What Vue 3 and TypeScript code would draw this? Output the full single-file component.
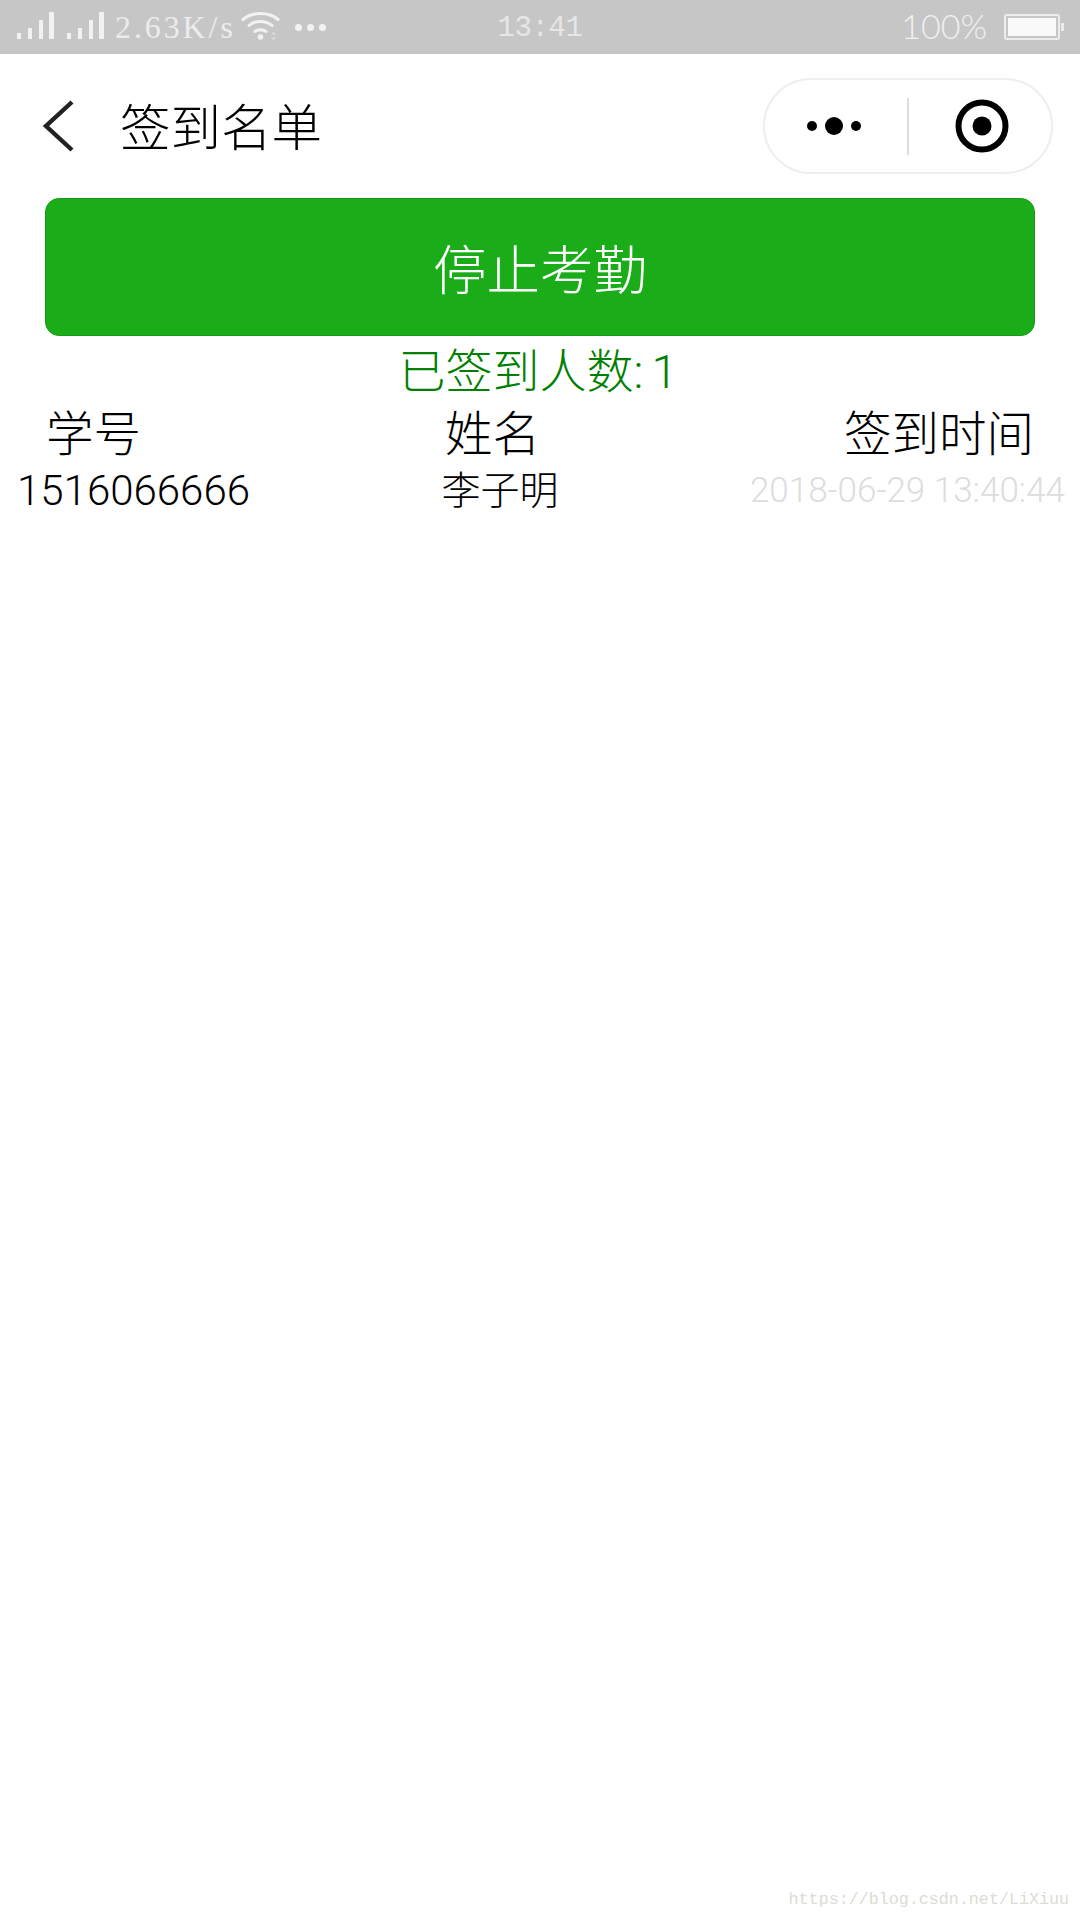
<template>
  <div class="page">
    <div class="status-bar">
      <div class="status-left">
        <svg class="signal" width="90" height="30" viewBox="0 0 90 30">
          <g v-for="group in [0, 50]" :key="group" :transform="`translate(${group} 0)`">
            <rect x="0" y="21" width="4" height="6" />
            <rect x="11" y="16" width="4" height="11" />
            <rect x="22" y="8" width="4" height="19" />
            <rect x="32" y="0" width="5" height="27" />
          </g>
        </svg>
        <span class="speed">2.63K/s</span>
        <svg class="wifi" width="40" height="30" viewBox="0 0 40 30" fill="none" stroke="#f2f2f2" stroke-linecap="round">
          <path d="M2 8.5C11 0.5 28 0.5 37 8.5" stroke-width="3.2" />
          <path d="M8 14.5C14 9 25 9 31 14.5" stroke-width="3" />
          <path d="M14 20.5C17 18 22 18 25 20.5" stroke-width="3" />
          <circle cx="19.5" cy="26" r="2.8" fill="#f2f2f2" stroke="none" />
          <path d="M30 23.5l2.5-2.5 2.5 2.5zM30 26.5l2.5 2.5 2.5-2.5z" fill="#dedede" stroke="none" />
        </svg>
        <div class="more-dots"><i></i><i></i><i></i></div>
      </div>
      <span class="clock">13:41</span>
      <div class="status-right">
        <span class="battery-text">100%</span>
        <div class="battery"><div class="battery-fill"></div></div>
        <div class="battery-nub"></div>
      </div>
    </div>

    <div class="nav-bar">
      <svg class="back" width="32" height="54" viewBox="0 0 32 54" fill="none">
        <path d="M29 3L3 27L29 51" stroke="#222" stroke-width="4.4" />
      </svg>
      <span class="nav-title">签到名单</span>
      <div class="capsule">
        <div class="capsule-more">
          <i class="small"></i><i class="big"></i><i class="small"></i>
        </div>
        <div class="capsule-line"></div>
        <div class="capsule-close">
          <svg width="54" height="54" viewBox="0 0 54 54">
            <circle cx="27" cy="27" r="23.5" fill="none" stroke="#000" stroke-width="6" />
            <circle cx="27" cy="27" r="9.5" fill="#000" />
          </svg>
        </div>
      </div>
    </div>

    <button class="stop-btn">停止考勤</button>
    <div class="count">已签到人数<span class="count-num">:{{ records.length }}</span></div>

    <div class="table-head">
      <span>学号</span>
      <span>姓名</span>
      <span>签到时间</span>
    </div>
    <div v-for="item in records" :key="item.id" class="table-row">
      <span class="cell-id">{{ item.id }}</span>
      <span class="cell-name">{{ item.name }}</span>
      <span class="cell-time">{{ item.time }}</span>
    </div>

    <div class="watermark">https://blog.csdn.net/LiXiuu</div>
  </div>
</template>

<script setup lang="ts">
interface SignRecord {
  id: string;
  name: string;
  time: string;
}

const records: SignRecord[] = [
  { id: '1516066666', name: '李子明', time: '2018-06-29 13:40:44' }
];
</script>

<style>
html,
body {
  margin: 0;
  background: #fff;
}
</style>

<style scoped>
.page {
  position: relative;
  width: 1080px;
  height: 1920px;
  overflow: hidden;
  background: #fff;
  color: #000;
  font-family: "Roboto", "Noto Sans CJK SC", sans-serif;
  font-weight: 300;
}

.status-bar {
  display: grid;
  grid-template-columns: 1fr auto 1fr;
  align-items: center;
  height: 54px;
  background: #c6c6c6;
  color: #ececec;
}

.status-left {
  display: flex;
  align-items: center;
  padding-left: 17px;
}

.signal {
  fill: #f2f2f2;
  margin-top: -1px;
}

.speed {
  margin-left: 8px;
  font-family: "Liberation Serif", serif;
  font-size: 32px;
  font-weight: 400;
  letter-spacing: 2.9px;
  line-height: 54px;
}

.wifi {
  margin-left: 5px;
  margin-top: -2px;
}

.more-dots {
  display: flex;
  gap: 5px;
  margin-left: 14px;
}

.more-dots i {
  width: 7px;
  height: 7px;
  border-radius: 50%;
  background: #f2f2f2;
}

.clock {
  padding-top: 3px;
  font-family: "Liberation Mono", monospace;
  font-size: 29px;
  font-weight: 400;
  letter-spacing: -0.4px;
  line-height: 51px;
  color: #e6e6e6;
}

.status-right {
  display: flex;
  align-items: center;
  justify-content: flex-end;
  padding-right: 16px;
}

.battery-text {
  margin-top: -3px;
  margin-right: 17px;
  font-family: "Lato", sans-serif;
  font-weight: 300;
  font-size: 34px;
  color: #f0f0f0;
}

.battery {
  box-sizing: border-box;
  width: 56px;
  height: 26px;
  padding: 2px;
  border: 2px solid #ededed;
  border-radius: 3px;
}

.battery-fill {
  height: 100%;
  background: #f9f9f9;
}

.battery-nub {
  width: 3px;
  height: 8px;
  margin-left: 1px;
  background: #ededed;
}

.nav-bar {
  display: flex;
  align-items: center;
  height: 144px;
  padding: 0 27px 0 43px;
}

.back {
  flex: none;
}

.nav-title {
  margin-left: 45px;
  margin-top: -4px;
  font-size: 50.5px;
  color: #000;
}

.capsule {
  box-sizing: border-box;
  display: flex;
  align-items: center;
  width: 290px;
  height: 96px;
  margin-left: auto;
  border: 2px solid #eee;
  border-radius: 48px;
}

.capsule-more {
  display: flex;
  align-items: center;
  gap: 8px;
  width: 142px;
  padding-left: 42px;
  box-sizing: border-box;
}

.capsule-more i {
  border-radius: 50%;
  background: #000;
}

.capsule-more .small {
  width: 10px;
  height: 10px;
}

.capsule-more .big {
  width: 18px;
  height: 18px;
}

.capsule-line {
  width: 2px;
  height: 57px;
  background: #ddd;
}

.capsule-close {
  display: flex;
  justify-content: center;
  flex: 1;
  padding-left: 4px;
}

.stop-btn {
  display: block;
  box-sizing: border-box;
  width: 990px;
  height: 138px;
  margin: 0 0 0 45px;
  padding: 0 0 2px;
  border: 1px solid #159a15;
  border-radius: 14px;
  background: #1aad19;
  color: #fff;
  font-family: inherit;
  font-weight: 300;
  font-size: 53.5px;
}

.count {
  margin-top: 8px;
  padding-left: 4px;
  font-size: 47px;
  line-height: 56px;
  text-align: center;
  color: #008000;
}

.count-num {
  letter-spacing: 8px;
}

.table-head,
.table-row {
  display: flex;
  justify-content: space-between;
  align-items: center;
}

.table-head {
  padding: 0 46px 0 46px;
  margin-top: 5px;
  font-size: 47.5px;
  line-height: 60px;
}

.table-row {
  padding: 0 15px 0 17px;
  margin-top: -2px;
  line-height: 56px;
}

.cell-id {
  font-size: 42px;
}

.cell-name {
  font-size: 39px;
}

.cell-time {
  font-size: 35px;
  color: #ddd;
}

.watermark {
  position: absolute;
  right: 11px;
  bottom: 10px;
  font-family: "Liberation Mono", monospace;
  font-size: 16.7px;
  font-weight: 400;
  line-height: 20px;
  color: #dcdcd4;
}
</style>
